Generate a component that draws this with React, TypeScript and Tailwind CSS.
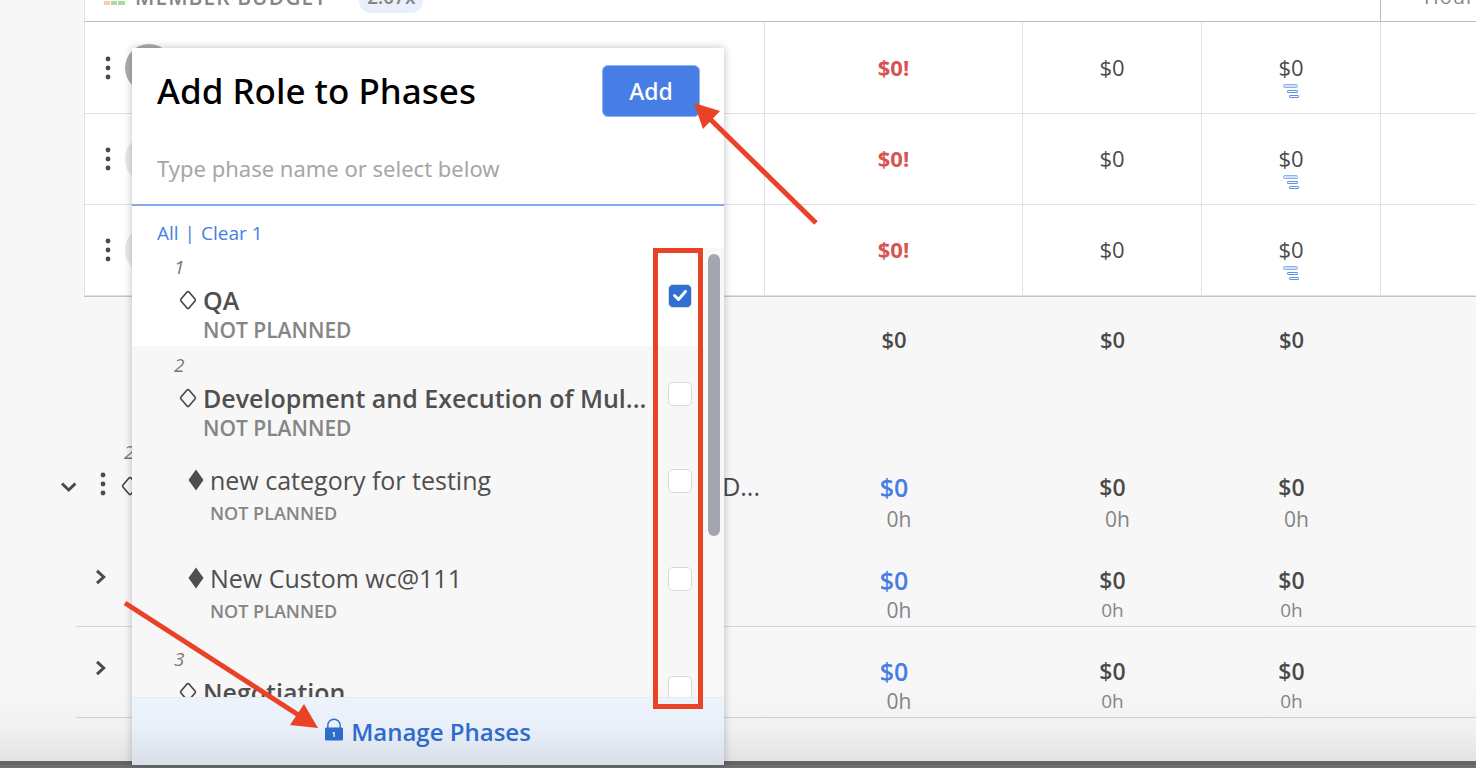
import { useState } from "react";

type Phase = {
  id: string;
  number?: string;
  name: string;
  child?: boolean;
};

const phases: Phase[] = [
  { id: "qa", number: "1", name: "QA" },
  { id: "dev", number: "2", name: "Development and Execution of Mul..." },
  { id: "category", name: "new category for testing", child: true },
  { id: "custom", name: "New Custom wc@111", child: true },
  { id: "negotiation", number: "3", name: "Negotiation" },
];

const members = [
  { id: 1, avatar: "bg-[#b0adae]" },
  { id: 2, avatar: "bg-[#e9e9e9]" },
  { id: 3, avatar: "bg-[#e9e9e9]" },
];

function Dots() {
  return (
    <svg width="8" height="24" viewBox="0 0 8 24" fill="#4a4a4a">
      <circle cx="4" cy="3" r="2.4" />
      <circle cx="4" cy="12" r="2.4" />
      <circle cx="4" cy="21" r="2.4" />
    </svg>
  );
}

function Diamond({ filled }: { filled?: boolean }) {
  if (filled) {
    return (
      <svg width="16" height="22" viewBox="0 0 16 22" className="shrink-0">
        <path d="M8 0.5 15.5 11 8 21.5 0.5 11Z" fill="#4f4f4f" />
      </svg>
    );
  }
  return (
    <svg width="18" height="20" viewBox="0 0 18 20" fill="none" className="shrink-0">
      <path
        d="M7.8 2.2Q9 0.9 10.2 2.2L16 9Q16.7 10 16 11L10.2 17.8Q9 19.1 7.8 17.8L2 11Q1.3 10 2 9Z"
        stroke="#4a4a4a"
        strokeWidth="1.7"
      />
    </svg>
  );
}

function Chevron({ open }: { open?: boolean }) {
  return (
    <svg width="16" height="16" viewBox="0 0 16 16" fill="none" stroke="#4a4a4a" strokeWidth="3">
      <path d={open ? "M2 4.5 8.7 11 15.4 4.5" : "M5 1.8 11.7 8 5 14.2"} />
    </svg>
  );
}

function GanttIcon() {
  return (
    <svg width="16" height="16" viewBox="0 0 16 16" fill="none" stroke="#5f90ea">
      <rect x="0.5" y="1.5" width="14" height="3" rx="1" fill="#cfdef9" stroke="#8db0f0" />
      <rect x="4.5" y="7.5" width="10" height="2" rx="0.5" />
      <rect x="6.5" y="12.5" width="9" height="2" rx="0.5" />
    </svg>
  );
}

function Columns({ first }: { first: "member" | "phase" }) {
  return (
    <colgroup>
      {first === "phase" && <col className="w-[76px]" />}
      <col className={first === "phase" ? "w-[689px]" : "w-[681px]"} />
      <col className="w-[258px]" />
      <col className="w-[179px]" />
      <col className="w-[179px]" />
      <col />
    </colgroup>
  );
}

function MemberTable() {
  const cell = "border-b border-r border-[#e2e2e2] p-0 text-center";
  return (
    <div className="pl-[84px]">
      <table className="-mt-[26px] w-full table-fixed border-separate border-spacing-0 border-b border-[#c4c4c4] bg-white text-[22px] leading-8 text-[#4a4a4a]">
        <Columns first="member" />
        <thead>
          <tr>
            <th
              colSpan={4}
              className="h-12 border-b border-r border-l border-[#bdbdbd] border-l-[#e2e2e2] p-0 pb-0.5 pl-[19px] text-left text-[21px] font-semibold text-[#858585]"
            >
              <div className="flex items-center">
                <svg width="21" height="16" viewBox="0 0 21 16">
                  <rect y="5" width="6" height="5" fill="#a9c7f5" />
                  <rect x="7" y="5" width="6" height="5" fill="#f7cfa5" />
                  <rect x="14" y="5" width="7" height="5" fill="#a8dba0" />
                  <rect y="12" width="6" height="4" fill="#f7cfa5" />
                  <rect x="7" y="12" width="6" height="4" fill="#a8dba0" />
                  <rect x="14" y="12" width="7" height="4" fill="#a8dba0" />
                </svg>
                <span className="ml-[10px] tracking-wider">MEMBER BUDGET</span>
                <span className="ml-8 rounded-xl bg-[#e9f0fc] px-2 text-[19px]">2.07x</span>
              </div>
            </th>
            <th className="h-12 border-b border-[#bdbdbd] p-0 pb-0.5 pl-[43px] text-left text-[20px] font-normal tracking-wider text-[#858585]">
              Hours
            </th>
          </tr>
        </thead>
        <tbody>
          {members.map((m) => (
            <tr key={m.id} className="h-[91px] first:h-[92px]">
              <td className={`${cell} border-l`}>
                <div className="flex items-center gap-[13px] pl-[19px]">
                  <button aria-label="Member menu">
                    <Dots />
                  </button>
                  <span className={`size-12 rounded-full ${m.avatar}`} />
                </div>
              </td>
              <td className={`${cell} pb-0.5 font-bold text-[#d75452]`}>$0!</td>
              <td className={`${cell} pb-0.5`}>$0</td>
              <td className={cell}>
                <div className="flex flex-col items-center pt-[14px]">
                  <span>$0</span>
                  <GanttIcon />
                </div>
              </td>
              <td className="border-b border-[#e2e2e2] p-0" />
            </tr>
          ))}
        </tbody>
      </table>
    </div>
  );
}

function PhaseTable() {
  const line = "h-[91px] border-b border-[#d4d4d4] p-0 align-top";
  const amount = "text-[23px] leading-8 font-semibold text-[#4a4a4a]";
  const blue = "text-[25px] leading-8 font-semibold text-[#467ee5]";
  const hours = "text-[21px] leading-7 text-[#858585]";
  const smallHours = "text-[19px] leading-7 text-[#858585]";
  return (
    <table className="w-full table-fixed border-separate border-spacing-0 text-center">
      <Columns first="phase" />
      <tbody>
        <tr className="text-[22px] leading-8 font-semibold text-[#4a4a4a]">
          <td className="h-[148px]" />
          <td />
          <td className="p-0 pt-[26px] align-top">$0</td>
          <td className="p-0 pt-[26px] align-top">$0</td>
          <td className="p-0 pt-[26px] align-top">$0</td>
          <td />
        </tr>
        <tr className="align-top">
          <td className="h-[91px] p-0 pt-8 text-right">
            <button aria-label="Collapse phase" className="pt-0.5">
              <Chevron open />
            </button>
          </td>
          <td className="p-0 text-left">
            <div className="h-[23px] pl-12 text-[19px] leading-[14px] text-[#7a7a7a] italic">2</div>
            <div className="flex h-9 items-center pl-[23px] text-[25px] leading-9 font-medium text-[#4a4a4a]">
              <button aria-label="Phase menu" className="mr-[14px] pb-1">
                <Dots />
              </button>
              <Diamond />
              <span className="ml-auto pr-[5px]">D...</span>
            </div>
          </td>
          <td className="p-0 pt-[26px]">
            <div className={blue}>$0</div>
            <div className={`${hours} mt-0.5 pl-[10px]`}>0h</div>
          </td>
          <td className="p-0 pt-[26px]">
            <div className={amount}>$0</div>
            <div className={`${hours} mt-0.5 pl-[10px]`}>0h</div>
          </td>
          <td className="p-0 pt-[26px]">
            <div className={amount}>$0</div>
            <div className={`${hours} mt-0.5 pl-[10px]`}>0h</div>
          </td>
          <td />
        </tr>
        {["first", "second"].map((key) => (
          <tr key={key}>
            <td className="h-[91px]" />
            <td className={`${line} pt-[31px] pl-4 text-left`}>
              <button aria-label="Expand work category">
                <Chevron />
              </button>
            </td>
            <td className={`${line} pt-7`}>
              <div className={blue}>$0</div>
              <div className={`${hours} pl-[10px]`}>0h</div>
            </td>
            <td className={`${line} pt-7`}>
              <div className={amount}>$0</div>
              <div className={smallHours}>0h</div>
            </td>
            <td className={`${line} pt-7`}>
              <div className={amount}>$0</div>
              <div className={smallHours}>0h</div>
            </td>
            <td className={line} />
          </tr>
        ))}
      </tbody>
    </table>
  );
}

type PhaseRowProps = {
  phase: Phase;
  checked: boolean;
  onToggle: () => void;
};

function PhaseRow({ phase, checked, onToggle }: PhaseRowProps) {
  return (
    <li className={`flex h-[98px] shrink-0 ${checked ? "bg-white" : "bg-[#f7f7f7]"}`}>
      <label
        htmlFor={phase.id}
        className={`min-w-0 flex-1 overflow-hidden whitespace-nowrap ${phase.child ? "pt-4 pl-14" : "pt-1.5 pl-[47px]"}`}
      >
        {phase.number && (
          <span className="-ml-[5px] block text-[19px] leading-[26px] text-[#7a7a7a] italic">{phase.number}</span>
        )}
        <span className="flex items-center gap-1.5 text-[25px] leading-10 text-[#4f4f4f]">
          <Diamond filled={phase.child} />
          <span className={phase.child ? "" : "font-semibold"}>{phase.name}</span>
        </span>
        <span
          className={`block font-semibold text-[#858585] ${phase.child ? "pl-[22px] text-[18px] leading-[26px]" : "pl-6 text-[21px] leading-5"}`}
        >
          NOT PLANNED
        </span>
      </label>
      <div className={`relative mr-3 ml-[13px] ${phase.child ? "pt-[25px]" : "pt-9"}`}>
        <input
          id={phase.id}
          type="checkbox"
          checked={checked}
          onChange={onToggle}
          className="block size-6 appearance-none rounded-[5px] border border-[#d9d9d9] bg-white checked:bg-[#2f6fd3]"
        />
        {checked && (
          <svg
            width="24"
            height="24"
            viewBox="0 0 24 24"
            fill="none"
            className="pointer-events-none absolute top-9 left-0"
          >
            <path d="M6.5 11.5 10.5 15.5 17.5 7.5" stroke="#fff" strokeWidth="3" strokeLinecap="round" strokeLinejoin="round" />
          </svg>
        )}
      </div>
    </li>
  );
}

function AddRoleDialog() {
  const [selected, setSelected] = useState<string[]>(["qa"]);
  const [query, setQuery] = useState("");

  const toggle = (id: string) =>
    setSelected((prev) => (prev.includes(id) ? prev.filter((p) => p !== id) : [...prev, id]));

  return (
    <section
      aria-label="Add Role to Phases"
      className="absolute top-12 bottom-[3px] left-[132px] flex w-[592px] flex-col bg-white shadow-[0_0_8px_rgba(0,0,0,0.25)]"
    >
      <header className="flex items-center justify-between pt-[17px] pr-6 pl-[25px] font-['Noto_Sans',sans-serif]">
        <h2 className="text-[35px] leading-[52px] font-medium text-black">Add Role to Phases</h2>
        <button className="h-[52px] w-[98px] rounded-md border border-[#8fb2f0] bg-[#467ee5] text-[23px] font-medium text-white">
          Add
        </button>
      </header>
      <input
        type="text"
        aria-label="Phase name"
        value={query}
        onChange={(e) => setQuery(e.target.value)}
        placeholder="Type phase name or select below"
        className="mt-4 h-[73px] w-full border-b-2 border-[#85aaee] px-[25px] pb-0.5 font-['Noto_Sans',sans-serif] text-[22px] outline-none placeholder:text-[#a6a6a6]"
      />
      <div className="flex h-[42px] gap-1.5 px-[25px] pt-3 text-[19px] leading-[30px] text-[#467ee5]">
        <button onClick={() => setSelected(phases.map((p) => p.id))}>All</button>
        <span>|</span>
        <button onClick={() => setSelected([])}>Clear {selected.length}</button>
      </div>
      <div className="flex min-h-0 flex-1">
        <ul className="flex min-w-0 flex-1 flex-col overflow-hidden">
          {phases.map((phase) => (
            <PhaseRow
              key={phase.id}
              phase={phase}
              checked={selected.includes(phase.id)}
              onToggle={() => toggle(phase.id)}
            />
          ))}
        </ul>
        <div className="w-5 bg-[#f8f8f8] px-1 pt-1.5">
          <div className="h-[282px] rounded-full bg-[#a2a6af]" />
        </div>
      </div>
      <button className="flex h-[68px] w-full shrink-0 items-center justify-center gap-2 border-t border-[#e6ebf3] bg-[#eef5fe] text-[24px] font-semibold text-[#2f6fd3]">
        <svg width="18" height="24" viewBox="0 0 18 24" className="mb-1">
          <path d="M2.8 10V7.5a6.2 6.2 0 0 1 12.4 0V10" fill="none" stroke="#2f6fd3" strokeWidth="1.4" />
          <rect y="9.5" width="18" height="13" rx="1.5" fill="#2f6fd3" />
          <path d="M7.6 14h2.2v5H8.3v-3.4h-.7Z" fill="#e6eefb" />
        </svg>
        Manage Phases
      </button>
    </section>
  );
}

export default function App() {
  return (
    <main className="relative flex min-h-screen flex-col overflow-hidden bg-[#f7f7f7] font-['Open_Sans',sans-serif]">
      <MemberTable />
      <PhaseTable />
      <div className="mt-auto h-[7px] bg-[#6e6e6e]" />
      <AddRoleDialog />

      {/* shade at the bottom edge of the window */}
      <div className="pointer-events-none absolute inset-x-0 bottom-[3px] h-20 bg-linear-to-b from-transparent via-black/2 to-black/9" />

      {/* callouts */}
      <div className="pointer-events-none absolute top-[248px] left-[653px] h-[461px] w-[50px] border-5 border-[#ea4226]" />
      <svg
        width="820"
        height="768"
        viewBox="0 0 820 768"
        fill="#ea4226"
        stroke="none"
        className="pointer-events-none absolute top-0 left-0"
      >
        <path d="M816 223 708 117" stroke="#ea4226" strokeWidth="5" />
        <path d="M694 103 720 111 703 129Z" />
        <path d="M125 603 300 716" stroke="#ea4226" strokeWidth="5" />
        <path d="M318 728 304 704 290 725Z" />
      </svg>
    </main>
  );
}
